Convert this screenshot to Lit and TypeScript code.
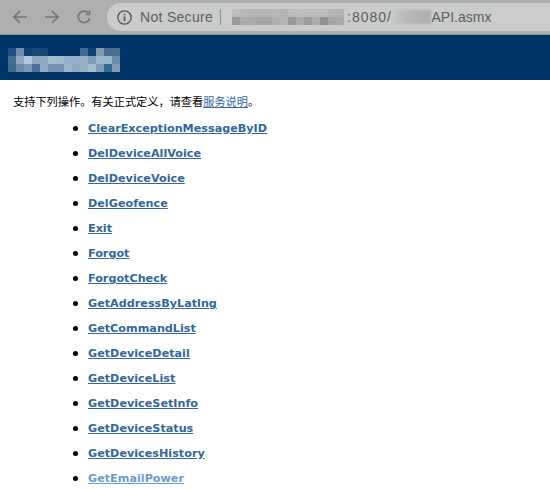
import { LitElement, html, css, svg } from "lit";
import { customElement } from "lit/decorators.js";

const OPS = ["ClearExceptionMessageByID","DelDeviceAllVoice","DelDeviceVoice","DelGeofence","Exit","Forgot","ForgotCheck","GetAddressByLatlng","GetCommandList","GetDeviceDetail","GetDeviceList","GetDeviceSetInfo","GetDeviceStatus","GetDevicesHistory","GetEmailPower"];

const HOST = [
  ["#bcbfbe","#b6b9b8","#b3b6b5","#b3b6b5","#b3b6b5","#b5b8b7","#b0b3b2","#b9bcbb","#bcbfbe","#b9bcbb","#b9bcbb","#b9bcbb","#b3b6b5","#b0b3b2"],
  ["#989b9a","#a8abaa","#a8abaa","#a5a8a7","#a5a8a7","#aeb1b0","#b3b6b5","#969998","#aaadac","#9a9d9c","#aaadac","#8f9291","#a5a8a7","#a8abaa"],
];
const PATH = ["#c4c7c6","#bcbfbe","#b6b9b8","#b3b6b5","#b0b3b2","#aeb1b0","#adb0af"];
const TITLE = [
  ["#1f4f80","#6f8caa","#0f3f70","#1a4a7a","#144577","#043466","#043466","#043466","#043466","#3f6a97","#0f3f70","#8098ad","#4a6d98","#4a7090"],
  ["#3f6f90","#8fa8c0","#b0c8da","#8fa8c0","#90a8c0","#a5bdd0","#a0b8cc","#98b0c8","#98b0c8","#9ab0c4","#7f9ab5","#9ab4c8","#98b4c8","#6d8aa8"],
  ["#3f6a90","#6a8aa8","#7a98b4","#4f709c","#90aac4","#7592b0","#7592b0","#98b2c8","#90a8c0","#98b0c4","#a5bbce","#7f9ab5","#336b90","#809ab5"],
];

@customElement("app-root")
export class AppRoot extends LitElement {
  static styles = css`
    :host { display: block; width: 550px; height: 489px; overflow: hidden; background: #fff; font-family: "DejaVu Sans", Verdana, sans-serif; }
    .chrome { height: 35px; box-sizing: border-box; background: #aeb0af; border-bottom: 1px solid #8f9190; display: flex; align-items: center; padding: 0 0 0 13px; }
    .nav { display: flex; gap: 18px; align-items: center; }
    .nav svg { display: block; width: 14px; height: 14px; fill: none; stroke: #747676; stroke-width: 1.7; }
    .omni { margin-left: 16px; flex: 1; height: 28px; background: #c9cccb; border-radius: 14px 0 0 14px; display: flex; align-items: center; padding-left: 10px; font-family: "Liberation Sans", Arial, sans-serif; font-size: 14px; color: #5b5d5e; white-space: nowrap; }
    .info { width: 15px; height: 15px; margin-right: 8px; fill: none; stroke: #555758; flex: none; }
    .secure { letter-spacing: .3px; }
    .port { letter-spacing: 1px; margin-left: 3px; }
    .sep { width: 1px; height: 16px; background: #8f9291; margin: 0 11px 0 7px; }
    .host { display: flex; flex-direction: column; filter: blur(.3px); }
    .row { display: flex; }
    .row i { display: block; width: 8px; height: 8px; }
    .path { display: flex; filter: blur(1px); margin-left: 1px; }
    .path i { display: block; width: 5.5px; height: 14px; }
    .band { height: 45px; box-sizing: border-box; background: #003366; padding: 13px 0 0 8px; }
    .title { display: flex; flex-direction: column; filter: blur(.5px); }
    .title .row i { height: 8px; }
    .intro { margin: 13px 0 0 13px; font-family: "Noto Sans CJK SC", sans-serif; font-size: 11.2px; line-height: 16px; color: #000; }
    a { color: #336699; }
    ul { list-style: none; margin: 7px 0 0; padding: 0 0 0 73px; }
    li { display: flex; align-items: center; height: 25px; font-size: 11.2px; font-weight: 700; }
    li::before { content: ""; width: 5px; height: 5px; border-radius: 50%; background: #000; margin-right: 10px; }
    li a.last { color: #6f9bcb; }
  `;
  render() {
    return html`
      <div class="chrome">
        <div class="nav">
          <svg viewBox="0 0 14 14">${svg`<path d="M14 7H1M7 1 1 7l6 6"/>`}</svg>
          <svg viewBox="0 0 14 14">${svg`<path d="M0 7h13M7 1l6 6-6 6"/>`}</svg>
          <svg viewBox="0 0 14 14">${svg`<path d="M12.6 8.2A5.7 5.7 0 1 1 11.2 3M12.6 .6v3.9H8.7"/>`}</svg>
        </div>
        <div class="omni">
          <svg class="info" viewBox="0 0 14 14">${svg`<circle cx="7" cy="7" r="6.2" stroke-width="1.3"/><path d="M7 6v4.4" stroke-width="1.6"/><path d="M7 3.4v1.5" stroke-width="1.6"/>`}</svg>
          <span class="secure">Not Secure</span><span class="sep"></span>
          <span class="host">${HOST.map(r => html`<span class="row">${r.map(c => html`<i style="background:${c}"></i>`)}</span>`)}</span>
          <span class="port">:8080/</span>
          <span class="path">${PATH.map(c => html`<i style="background:${c}"></i>`)}</span>
          <span>API.asmx</span>
        </div>
      </div>
      <div class="band"><div class="title">${TITLE.map(r => html`<div class="row">${r.map(c => html`<i style="background:${c}"></i>`)}</div>`)}</div></div>
      <div class="intro">支持下列操作。有关正式定义，请查看<a href="#">服务说明</a>。</div>
      <ul>${OPS.map((o, i) => html`<li><a href="#" class=${i === OPS.length - 1 ? "last" : ""}>${o}</a></li>`)}</ul>
    `;
  }
}
